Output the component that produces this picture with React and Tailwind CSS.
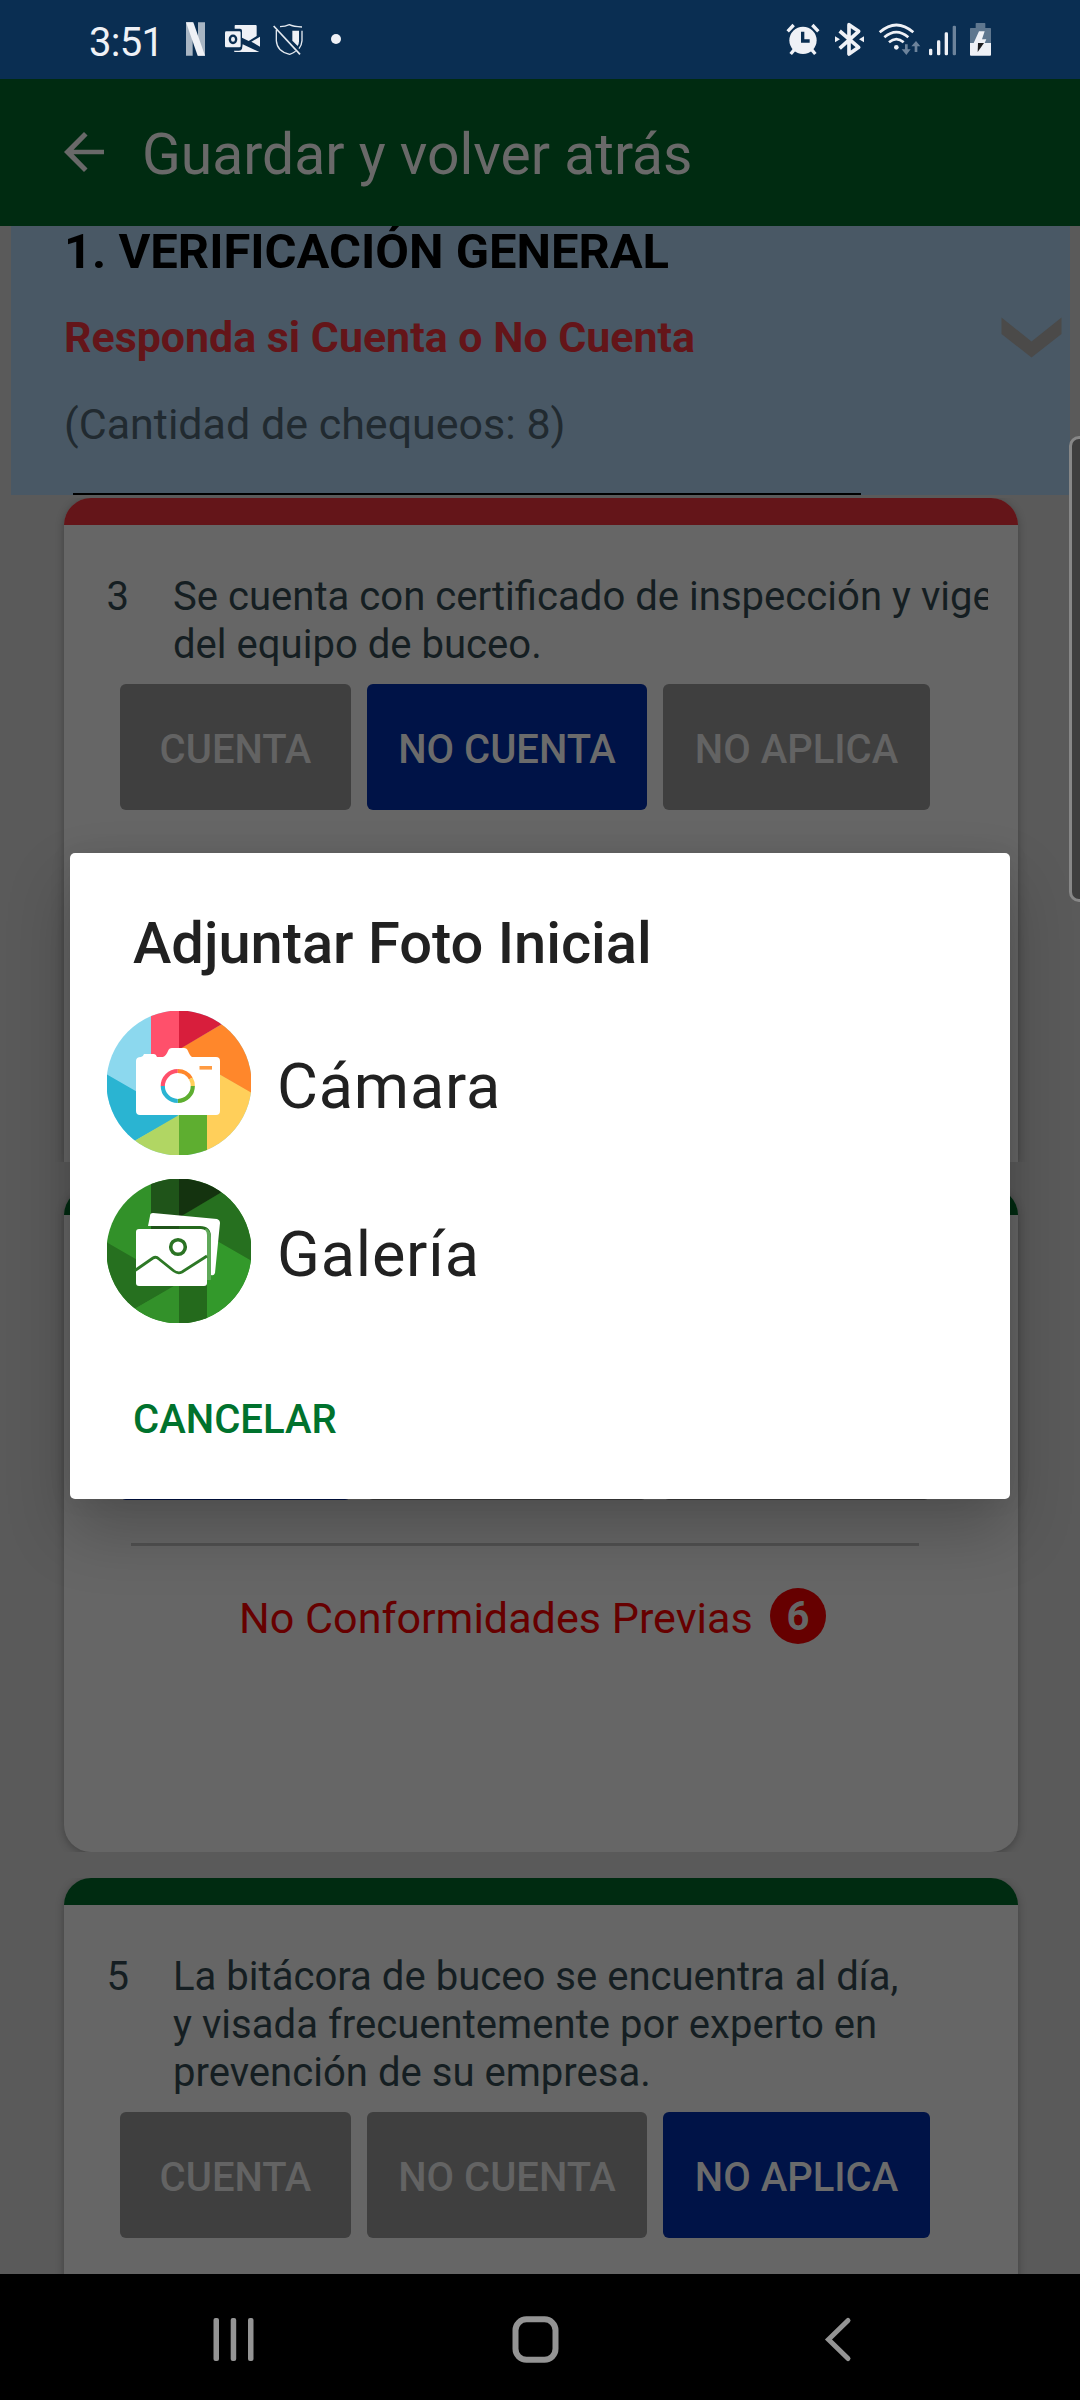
import React from 'react';

/* ---------- Status bar icons ---------- */

const NetflixIcon = () => (
  <svg className="ml-0 h-[38px] w-5 shrink-0" viewBox="318 30 60 114">
    <path d="M318 37h20v100h-20zM354 37h21v100h-21z" fill="#a8b5c3" />
    <path d="M318 37h22l35 100h-22z" fill="#eff1f6" />
  </svg>
);

const OutlookIcon = () => (
  <svg className="ml-[18px] h-[38px] w-[37px] shrink-0" viewBox="432 30 111 114">
    <g fill="#eff1f6">
      <path d="M466 45h61q3 0 3 3v30l-24 15-20-10V62q0-6-6-6h-16v-8q0-3 2-3z" />
      <path d="M540 80v30l-26-15z" />
      <path d="M462 122h15q7 0 9-6l2-13 50 23h-73q-3 0-3-4z" />
      <rect x="435" y="64" width="47" height="48" rx="4" />
    </g>
    <ellipse cx="459" cy="88" rx="9.500" ry="11" fill="none" stroke="#0a2e52" strokeWidth="7" />
  </svg>
);

const ShieldOffIcon = () => (
  <svg className="ml-[11px] h-[38px] w-8 shrink-0" viewBox="576 30 96 114">
    <g fill="none" stroke="#e4e9ef" strokeWidth="4">
      <path d="M600 50q16 0 28-6q12 6 38 7" />
      <path d="M589 60v32q2 32 40 41q10-3 18-9" />
      <path d="M666 62v30q-1 14-9 24" />
      <path d="M581 48l79 85" strokeWidth="5" />
    </g>
    <path d="M637 62h20v32q0 8-4 14l-16-16z" fill="#eff1f6" />
  </svg>
);

const AlarmIcon = () => (
  <svg className="h-[38px] w-[34px] shrink-0" viewBox="18 30 102 114">
    <circle cx="69" cy="91" r="41" fill="#eff1f6" />
    <path d="M23 64l18-19M115 64L97 45" stroke="#eff1f6" strokeWidth="10" />
    <path d="M43 119L32 132M95 119l11 13" stroke="#eff1f6" strokeWidth="10" />
    <path d="M68 65v28h21" fill="none" stroke="#0a2e52" strokeWidth="10" />
  </svg>
);

const BluetoothIcon = () => (
  <svg className="ml-3.5 h-[38px] w-[31px] shrink-0" viewBox="162 30 93 114">
    <path
      d="M179 63l57 49-29 20V44l29 20-57 51"
      fill="none"
      stroke="#eff1f6"
      strokeWidth="11"
      strokeLinejoin="round"
    />
    <path d="M165 79l15 9-15 9zM252 79l-15 9 15 9z" fill="#eff1f6" />
  </svg>
);

const WifiIcon = () => (
  <svg className="ml-[13px] h-[38px] w-[43px] shrink-0" viewBox="294 30 129 114">
    <g fill="none" stroke="#eff1f6" strokeWidth="8">
      <path d="M299 67q50-44 101 0" />
      <path d="M313 82q36-31 72 0" />
      <path d="M327 97q22-19 44 0" />
    </g>
    <circle cx="349" cy="112" r="7" fill="#eff1f6" />
    <g fill="#6d839b">
      <path d="M375 103h8v15h9l-13 17-14-17h10z" />
      <path d="M404 126h8v-17h9l-13-16-14 16h10z" />
    </g>
  </svg>
);

const SignalIcon = () => (
  <svg className="ml-[7px] h-[38px] w-[29px] shrink-0" viewBox="444 30 87 114">
    <g fill="#eff1f6">
      <rect x="447" y="116" width="10" height="20" rx="4" />
      <rect x="471" y="91" width="10" height="45" rx="4" />
      <rect x="494" y="67" width="10" height="69" rx="4" />
    </g>
    <rect x="518" y="47" width="10" height="89" rx="4" fill="#6d839b" />
  </svg>
);

const BatteryIcon = () => (
  <svg className="ml-3 h-[38px] w-[23px] shrink-0" viewBox="567 30 69 114">
    <path d="M587 41q0-2 2-2h25q2 0 2 2v13h15q2 0 2 2v43h-63V56q0-2 2-2h15z" fill="#5f778f" />
    <path d="M570 99h63v35q0 3-3 3h-57q-3 0-3-3z" fill="#eff1f6" />
    <path d="M597 64h17l-8 24h13l-5 11h-33z" fill="#eff1f6" />
    <path d="M594 99h18l-19 27z" fill="#1d1d1f" />
  </svg>
);

function StatusBar() {
  return (
    <header className="flex h-[79px] shrink-0 items-start bg-[#0a2e52] pt-5 pr-[88px] pl-[89px]">
      <span className="w-[97px] pt-px text-[40px] leading-[43px] tracking-[-0.7px] text-[#eff1f6]">3:51</span>
      <NetflixIcon />
      <OutlookIcon />
      <ShieldOffIcon />
      <span className="mt-3.5 ml-[27px] size-2.5 rounded-full bg-[#eff1f6]" />
      <div className="ml-auto flex">
        <AlarmIcon />
        <BluetoothIcon />
        <WifiIcon />
        <SignalIcon />
        <BatteryIcon />
      </div>
    </header>
  );
}

function AppBar() {
  return (
    <div className="flex h-[147px] shrink-0 items-start bg-[#002b11] pl-[54px] text-[#696969]">
      <svg className="mt-[43px] size-[60px] shrink-0" viewBox="0 0 24 24" fill="currentColor">
        <path d="M20 11.100H7.830l5.590-5.690L12 4l-8 8 8 8 1.410-1.410L7.830 12.900H20z" />
      </svg>
      <h1 className="ml-7 pt-[39px] text-[57px] leading-[74px]">Guardar y volver atrás</h1>
    </div>
  );
}

/* ---------- Checklist ---------- */

function SectionHeader() {
  return (
    <section className="mx-[11px] flex h-[269px] w-[1059px] shrink-0 justify-between bg-[#495865] pl-[53px]">
      <div className="flex flex-col">
        <h2 className="-mt-[3px] text-[48.900px] leading-[58px] font-bold text-black">1. VERIFICACIÓN GENERAL</h2>
        <p className="mt-[30px] text-[42.900px] leading-[52px] font-bold text-[#641519]">
          Responda si Cuenta o No Cuenta
        </p>
        <p className="mt-[35px] text-[43px] leading-[52px] text-[#212a30]">(Cantidad de chequeos: 8)</p>
        <div className="mt-[43px] ml-[9px] h-0.5 w-[788px] bg-black" />
      </div>
      <svg className="mt-[91px] mr-2 h-[41px] w-[61px]" viewBox="0 0 61 41">
        <path d="M.5 .5L30.500 24.500 60.500 .5V17L30.500 40.500.5 17z" fill="#4b4a49" />
      </svg>
    </section>
  );
}

const WIDTHS = ['w-[231px]', 'w-[280px]', 'w-[267px]'];
const ANSWERS = ['CUENTA', 'NO CUENTA', 'NO APLICA'];

function AnswerButtons({ selected }) {
  return (
    <div className="flex gap-4 pl-14">
      {ANSWERS.map((label, i) => (
        <button
          key={label}
          className={`${WIDTHS[i]} h-[126px] shrink-0 rounded-md pt-1.5 text-[40px] font-medium whitespace-nowrap ${
            selected === i ? 'bg-[#001347] text-[#6b6b6b]' : 'bg-[#3f3f3f] text-[#636363]'
          }`}
        >
          {label}
        </button>
      ))}
    </div>
  );
}

function Card({ height, bar, rounded, children }) {
  return (
    <div className={`${height} shrink-0 overflow-hidden px-[64px] pr-[62px]`}>
      <article className={`h-full rounded-t-[27px] bg-[#666666] shadow-[0_2px_9px_rgba(0,0,0,0.28)] ${rounded}`}>
        <div className={`h-[27px] rounded-t-[27px] ${bar}`} />
        {children}
      </article>
    </div>
  );
}

function Question({ number, lines }) {
  return (
    <div className="flex pt-12 text-[40.100px] leading-[48px] text-[#151e22]">
      <span className="w-[67px] pr-[2px] text-right">
        <span className="inline-block w-[26px]">{number}</span>
      </span>
      <p className="ml-[42px] w-[815px] overflow-hidden whitespace-nowrap">
        {lines.map((line) => (
          <span key={line} className="block">
            {line}
          </span>
        ))}
      </p>
    </div>
  );
}

function Checklist() {
  return (
    <main className="flex h-[2048px] shrink-0 flex-col overflow-hidden bg-[#5a5a5a]">
      <SectionHeader />
      <div className="h-[3px] shrink-0" />
      <Card height="h-[664px]" bar="bg-[#641519]">
        <Question
          number="3"
          lines={['Se cuenta con certificado de inspección y vigente', 'del equipo de buceo.']}
        />
        <div className="h-[15px]" />
        <AnswerButtons selected={1} />
      </Card>
      <div className="h-[26px] shrink-0" />
      <Card height="h-[664px]" bar="bg-[#002b11]" rounded="rounded-b-[27px]">
        <div className="h-[159px]" />
        <AnswerButtons selected={0} />
        <div className="mt-[43px] ml-[67px] h-[3px] w-[788px] bg-[#515151]" />
        <div className="mt-[42px] flex items-center pl-[175px]">
          <p className="w-[514px] pt-[5px] text-[43.100px] leading-[51px] whitespace-nowrap text-[#660000]">No Conformidades Previas</p>
          <span className="ml-[17px] flex size-14 items-center justify-center rounded-full bg-[#660000] pt-0.5 text-[40px] leading-[54px] font-bold text-[#666666]">
            6
          </span>
        </div>
      </Card>
      <div className="h-[26px] shrink-0" />
      <Card height="h-[500px]" bar="bg-[#002b11]">
        <Question
          number="5"
          lines={[
            'La bitácora de buceo se encuentra al día,',
            'y visada frecuentemente por experto en',
            'prevención de su empresa.',
          ]}
        />
        <div className="h-[15px]" />
        <AnswerButtons selected={2} />
      </Card>
    </main>
  );
}

/* ---------- Attachment dialog ---------- */

function ShutterDisc({ id, colors, children }) {
  const [sky, pink, crimson, orange, yellow, green, lime, teal] = colors;
  return (
    <svg className="size-36 shrink-0" viewBox="0 0 144 144">
      <clipPath id={id}>
        <circle cx="72" cy="72" r="72.500" />
      </clipPath>
      <g clipPath={`url(#${id})`}>
        <rect width="144" height="144" fill={sky} />
        <path d="M0 63.500L72 105 29 129 10 144H0z" fill={teal} />
        <path d="M72 104L29 129 10 144H72z" fill={lime} />
        <path d="M100 144h44V81L72 40V104z" fill={yellow} />
        <path d="M72 60h28v84H72z" fill={green} />
        <path d="M144 81.500L72 40V38L115 13 134 0H144z" fill={orange} />
        <path d="M72 0V38.500L115 13 134 0z" fill={crimson} />
        <path d="M44 0H72V60H44z" fill={pink} />
        {children}
      </g>
    </svg>
  );
}

const CameraIcon = () => (
  <ShutterDisc
    id="disc-camera"
    colors={['#8cd8ee', '#ff506b', '#d81e3c', '#ff872b', '#ffcf5a', '#5eae30', '#b1d663', '#2ab4d2']}
  >
    <path
      d="M34 46q2 0 3-3h10q2 0 3 3h6q3-1 5-6 1-3 4-3h12q3 0 4 3 2 5 4 6h24q4 0 4 4v50q0 4-4 4H33q-4 0-4-4V50q0-4 5-4z"
      fill="#fff"
    />
    <g fill="none" strokeWidth="4.200">
      <path d="M55.800 75a15 15 0 0 1 15-15" stroke="#ff506b" />
      <path d="M70.800 60a15 15 0 0 1 13 7.500" stroke="#ff872b" />
      <path d="M83.800 67.500a15 15 0 0 1 2 7.500" stroke="#ffcf5a" />
      <path d="M85.800 75a15 15 0 0 1-15 15" stroke="#5eae30" />
      <path d="M70.800 90a15 15 0 0 1-15-15" stroke="#2ab4d2" />
    </g>
    <rect x="92.500" y="55" width="12.500" height="3.600" fill="#ff9b42" />
  </ShutterDisc>
);

const GalleryIcon = () => (
  <ShutterDisc
    id="disc-gallery"
    colors={['#329129', '#1f5419', '#14330f', '#26701f', '#33992b', '#246a1c', '#33912a', '#26701f']}
  >
    <rect x="72" y="44" width="28" height="64" fill="#246a1c" />
    <path
      d="M43 37q0-3 3-3l64 6q3 1 3 4l-5 50q-1 3-4 2V58q0-11-11-11H41z"
      fill="#fff"
    />
    <path d="M98 51q4 2 4 8v42" fill="none" stroke="#5fa959" strokeWidth="4" />
    <path d="M32 50h62q6 0 6 6v48q0 3-3 3H32q-3 0-3-3V53q0-3 3-3z" fill="#fff" />
    <circle cx="71" cy="68" r="7.300" fill="none" stroke="#2b7324" strokeWidth="3.600" />
    <path
      d="M28 91.500L46 79q3-2 6 1l15 12q4 3 8 1l25-16"
      fill="none"
      stroke="#2d7826"
      strokeWidth="2.800"
    />
  </ShutterDisc>
);

function AttachDialog() {
  return (
    <div
      role="dialog"
      className="absolute top-[853px] left-[70px] flex h-[646px] w-[940px] flex-col rounded-[5px] bg-white text-[#212121] shadow-[0_32px_64px_rgba(0,0,0,0.22),0_0_24px_rgba(0,0,0,0.07)]"
    >
      <h2 className="mt-[54px] ml-[63px] text-[57.800px] leading-[72px] font-medium">Adjuntar Foto Inicial</h2>
      <div className="mt-8 ml-[37px] flex flex-col gap-6">
        <div className="flex items-center gap-[26px]">
          <CameraIcon />
          <span className="pt-[7px] text-[63px] leading-[72px] tracking-[0.8px]">Cámara</span>
        </div>
        <div className="flex items-center gap-[26px]">
          <GalleryIcon />
          <span className="pt-[7px] text-[63px] leading-[72px] tracking-[0.8px]">Galería</span>
        </div>
      </div>
      <button className="mt-[73px] ml-[63px] self-start text-[40.100px] leading-[48px] font-medium text-[#00722d]">
        CANCELAR
      </button>
    </div>
  );
}

function NavBar() {
  return (
    <nav className="flex h-[126px] shrink-0 items-start bg-black pt-10 pl-[210px]">
      <svg className="h-[50px] w-12" viewBox="0 0 48 50" fill="#949494">
        <rect x="3.500" y="4" width="5.500" height="43" rx="2" />
        <rect x="20.700" y="4" width="5.500" height="43" rx="2" />
        <rect x="38" y="4" width="5.500" height="43" rx="2" />
      </svg>
      <svg className="ml-[252px] h-[50px] w-[52px]" viewBox="0 0 52 50">
        <rect x="5.500" y="5.300" width="40" height="40.500" rx="11" fill="none" stroke="#949494" strokeWidth="6" />
      </svg>
      <svg className="ml-[258px] h-[50px] w-9" viewBox="0 0 36 50">
        <path
          d="M28 6.500L8.500 25.500 28 44.500"
          fill="none"
          stroke="#949494"
          strokeWidth="5"
          strokeLinecap="round"
        />
      </svg>
    </nav>
  );
}

export default function App() {
  return (
    <div className="relative flex h-[2400px] w-[1080px] flex-col overflow-hidden bg-black font-[Roboto,sans-serif]">
      <StatusBar />
      <AppBar />
      <Checklist />
      <NavBar />
      <AttachDialog />
      <div className="absolute top-[436px] -right-2 h-[466px] w-[19px] rounded-l-[10px] border-[3px] border-[#878787] bg-[#3e3e3e]" />
    </div>
  );
}
